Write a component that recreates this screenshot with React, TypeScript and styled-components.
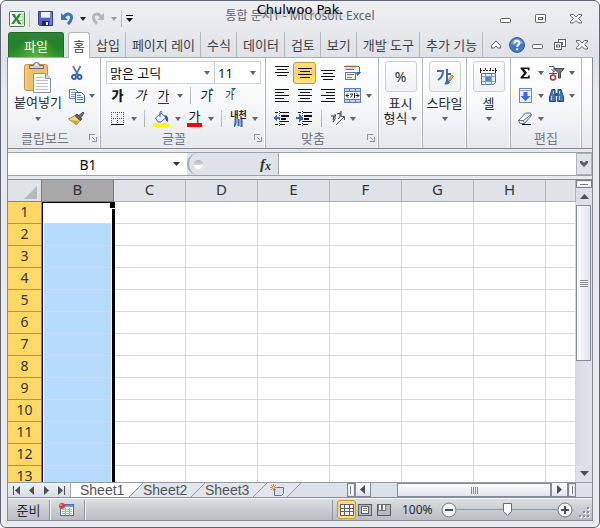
import React, { useEffect, useState } from "react";
import styled, { createGlobalStyle, css } from "styled-components";

const UI = `"Noto Sans", "Noto Sans CJK KR", sans-serif`;

const Global = createGlobalStyle`
  *, *::before, *::after { box-sizing: border-box; }
  body { margin: 0; background: #fff; font-family: ${UI}; font-size: 13px; color: #262a30; }
  button, input, select { font: inherit; color: inherit; margin: 0; padding: 0; border: 0; background: none; border-radius: 0; outline: 0; }
  svg { display: block; flex: none; }
`;

/* ---------- window ---------- */

const Frame = styled.div`
  height: 100vh;
  display: flex;
  flex-direction: column;
  padding: 0 6px 6px;
  border: 1px solid #626873;
  border-radius: 6px;
  background: linear-gradient(#eeeff2 0, #dfe2e6 56px, #e8eaed 90px, #ebecef 100%);
  overflow: hidden;
`;

const TitleBar = styled.header`
  position: relative;
  display: grid;
  grid-template-columns: 1fr auto 1fr;
  align-items: center;
  height: 31px;
  padding-top: 4px;
`;

const QuickAccess = styled.div`
  display: flex;
  align-items: center;
  padding-left: 2px;
`;

const ToolButton = styled.button<{ $w?: number; $h?: number }>`
  display: flex;
  align-items: center;
  justify-content: center;
  flex: none;
  width: ${(p) => p.$w ?? 23}px;
  height: ${(p) => p.$h ?? 23}px;
`;

const ThinRule = styled.span<{ $w?: number }>`
  flex: none;
  width: ${(p) => p.$w ?? 11}px;
  height: 17px;
  background: linear-gradient(#c5c9ce, #a9adb3) center / 1px 100% no-repeat;
`;

const Title = styled.h1`
  align-self: start;
  margin: 0;
  padding-top: 3px;
  font-size: 12px;
  font-weight: 400;
  line-height: 16px;
  color: #5b6067;
  white-space: nowrap;
`;

const UserName = styled.div`
  position: absolute;
  top: 0;
  left: 0;
  right: 0;
  text-align: center;
  font: 13px/18px "DejaVu Sans", sans-serif;
  color: #000;
  text-shadow: 3px 3px 2px #b4b6b9;
  pointer-events: none;
`;

const WindowControls = styled.div`
  display: flex;
  justify-content: flex-end;
  gap: 12px;
  padding-right: 6px;
`;

/* ---------- ribbon tabs ---------- */

const TabStrip = styled.nav`
  display: flex;
  align-items: stretch;
  height: 25px;
`;

const FileTab = styled.button`
  width: 56px;
  margin: 0 4px 0 1px;
  border: 1px solid #1d6a25;
  border-bottom: 0;
  border-radius: 3px 3px 0 0;
  background: radial-gradient(ellipse at 50% 100%, #5cb531, transparent 60%), linear-gradient(#2f8338, #24802c 50%, #2f9030);
  color: #fff;
  flex: none;
`;

const RibbonTab = styled.button<{ $active?: boolean }>`
  flex: none;
  height: 25px;
  padding: 0 5px 0 6px;
  line-height: 22px;
  color: #3d4248;
  white-space: nowrap;
  border-right: 1px solid #b4b9bf;
  ${(p) =>
    p.$active &&
    css`
      height: 26px;
      padding: 0 4px;
      border: 1px solid #b4b9bf;
      border-bottom: 0;
      border-radius: 3px 3px 0 0;
      background: #fff;
      z-index: 1;
    `}
`;

const DocControls = styled.div`
  display: flex;
  flex: 1;
  justify-content: space-between;
  align-items: center;
  padding: 0 1px;
`;

/* ---------- ribbon ---------- */

const Body = styled.main`
  flex: 1;
  min-height: 0;
  display: flex;
  flex-direction: column;
  border: 1px solid #858b94;
  border-top-color: #a9aeb5;
`;

const Ribbon = styled.section`
  display: flex;
  height: 91px;
  flex: none;
  border-bottom: 1px solid #85888e;
  background: linear-gradient(#fff, #f7f8f9 50%, #e5e8ec);
`;

const Group = styled.section<{ $w: number }>`
  display: grid;
  grid-template-rows: 69px 18px;
  flex: none;
  width: ${(p) => p.$w}px;
  padding-top: 3px;
  border-right: 1px solid #b2b6bc;
  box-shadow: inset -1px 0 #fff;
`;

const GroupLabel = styled.h2`
  position: relative;
  margin: 0;
  font-size: 13px;
  font-weight: 400;
  line-height: 16px;
  text-align: center;
  color: #6d7681;
`;

const LabelText = styled.span<{ $launch?: boolean }>`
  padding-right: ${(p) => (p.$launch ? 18 : 0)}px;
`;

const Launcher = styled.button`
  position: absolute;
  right: 3px;
  top: 4px;
`;

const Rows = styled.div<{ $pad: number }>`
  display: grid;
  grid-template-rows: repeat(3, 23px);
  padding-left: ${(p) => p.$pad}px;
`;

const Row = styled.div`
  display: flex;
  align-items: center;
`;

const Split = styled.div`
  display: grid;
  grid-template-columns: 57px 1fr;
`;

const PasteButton = styled.button`
  display: flex;
  flex-direction: column;
  align-items: center;
  height: 68px;
  padding-left: 3px;
  white-space: nowrap;
  line-height: 18px;
`;

const Combo = styled.label<{ $w: number }>`
  position: relative;
  display: flex;
  align-items: center;
  width: ${(p) => p.$w}px;
  height: 23px;
  border: 1px solid #cdd1d6;
  & + & { border-left: 0; }
  background: #fff;
  svg { position: absolute; right: 4px; pointer-events: none; }
`;

const ComboSelect = styled.select`
  width: 100%;
  height: 21px;
  padding-left: 3px;
  appearance: none;
  color: #111;
`;

const Toggle = styled(ToolButton)`
  border: 1px solid #c49a3c;
  border-radius: 3px;
  background: linear-gradient(#fbdc86, #fdd063 50%, #fee48c);
`;

const Glyph = styled.span<{ $kind?: "bold" | "italic" | "under" | "color"; $s?: number }>`
  font-size: ${(p) => p.$s ?? 13}px;
  line-height: 15px;
  color: #1b1b1b;
  font-weight: ${(p) => (p.$kind === "bold" ? 900 : 400)};
  font-style: ${(p) => (p.$kind === "italic" ? "italic" : "normal")};
  ${(p) => p.$kind === "under" && css`border-bottom: 1px solid #333;`}
  ${(p) => p.$kind === "color" && css`padding: 0 2px; border-bottom: 4px solid #f00; line-height: 13px;`}
`;

const GlyphSize = styled.span`
  display: flex;
  align-items: center;
  svg { margin: -13px 0 0 -3px; }
`;

const Phonetic = styled.span`
  display: flex;
  flex-direction: column;
  align-items: center;
  font-size: 9px;
  font-weight: 700;
  line-height: 9px;
  white-space: nowrap;
  color: #222;
`;

const BigButton = styled.button`
  display: flex;
  flex-direction: column;
  align-items: center;
  width: 100%;
  line-height: 15px;
  white-space: nowrap;
`;

const BigIcon = styled.span`
  display: flex;
  align-items: center;
  justify-content: center;
  width: 32px;
  height: 31px;
  margin-bottom: 4px;
  border: 1px solid #ccd0d6;
  border-radius: 3px;
  background: linear-gradient(#fdfdfe, #eff1f4);
  font-size: 14px;
`;

const Inline = styled.span<{ $h?: number }>`
  display: flex;
  align-items: center;
  gap: 4px;
  height: ${(p) => p.$h ?? 15}px;
`;

/* ---------- formula bar ---------- */

const FormulaBar = styled.section`
  display: flex;
  flex: none;
  height: 24px;
  margin-top: 3px;
  border: solid #9ba1a9;
  border-width: 1px 0;
  background: #dfe2e6;
`;

const NameBox = styled.label`
  position: relative;
  display: flex;
  align-items: center;
  width: 179px;
  background: #fff;
  svg { position: absolute; right: 7px; pointer-events: none; }
`;

const NameInput = styled.input`
  width: 160px;
  text-align: center;
  font-size: 14px;
  color: #111;
`;

const FxArea = styled.div`
  display: flex;
  justify-content: space-between;
  align-items: center;
  width: 92px;
  padding: 0 7px 0 5px;
  border: 1px solid #a4a9b0;
  border-width: 0 1px 0 2px;
  border-radius: 11px 0 0 11px;
`;

const Knob = styled.span`
  width: 9px;
  height: 9px;
  border-radius: 5px;
  background: linear-gradient(#aeb2b7, #d4d7da 50%, #fff 60%);
`;

const FxButton = styled.button`
  font: italic bold 15px/18px "Liberation Serif", serif;
  color: #333;
  sub { font-size: 12px; line-height: 10px; vertical-align: -1px; }
`;

const FormulaInput = styled.input`
  flex: 1;
  min-width: 0;
  padding: 0 4px;
  background: #fff;
  font-size: 14px;
`;

const Expand = styled(ToolButton)`
  border: 1px solid #b0b5bb;
`;

/* ---------- sheet ---------- */

const SheetArea = styled.section`
  display: flex;
  flex: 1;
  min-height: 0;
  margin-top: 3px;
  border-top: 1px solid #85888e;
`;

const GridViewport = styled.div`
  position: relative;
  flex: 1;
  min-width: 0;
  overflow: hidden;
  background: #fff;
`;

const Sheet = styled.table`
  width: 100%;
  table-layout: fixed;
  border-collapse: separate;
  border-spacing: 0;
  font-size: 15px;
  line-height: 19px;
  color: #32363b;
  th { font-weight: 400; vertical-align: top; }
`;

const Col = styled.col<{ $w?: number }>`
  width: ${(p) => (p.$w ? p.$w + "px" : "auto")};
`;

const ColHead = styled.th<{ $on?: boolean }>`
  height: 22px;
  padding: 0;
  border-right: 1px solid ${(p) => (p.$on ? "#75787c" : "#b2b6bb")};
  border-bottom: 1px solid ${(p) => (p.$on ? "#75787c" : "#a9adb2")};
  background: ${(p) => (p.$on ? "#a8a8a8" : "#dfe2e6")};
`;

const Corner = styled.td`
  padding: 0;
  border-right: 1px solid #75787c;
  border-bottom: 1px solid #b78434;
  background: #dfe2e6;
  svg { margin: 4px 4px 0 auto; }
`;

const RowHead = styled.th`
  height: 22px;
  padding: 0;
  border-right: 1px solid #b78434;
  border-bottom: 1px solid #c68f36;
  background: #fed965;
  font-size: 14px;
`;

const Cell = styled.td<{ $sel?: boolean }>`
  height: 22px;
  padding: 0;
  border-right: 1px solid #d8d9da;
  border-bottom: 1px solid ${(p) => (p.$sel ? "#c9def6" : "#d8d9da")};
  background: ${(p) => (p.$sel ? "#b7daff" : "#fff")};
`;

const Selection = styled.div`
  position: absolute;
  left: 34px;
  top: 22px;
  bottom: -4px;
  width: 73px;
  border: 1px solid #000;
  border-right-width: 3px;
  box-shadow: inset 1px 0 #fff, inset -1px 0 #fff;
  pointer-events: none;
  &::after {
    content: "";
    position: absolute;
    right: -4px;
    top: 0;
    width: 7px;
    height: 6px;
    border: solid #fff;
    border-width: 0 1px 1px;
    background: #000;
  }
`;

const VScroll = styled.div`
  display: flex;
  flex-direction: column;
  width: 16px;
  background: #dce0e6;
`;

const SplitBox = styled.span<{ $v?: boolean }>`
  flex: none;
  width: ${(p) => (p.$v ? 8 : 16)}px;
  height: ${(p) => (p.$v ? 14 : 8)}px;
  border: 1px solid #7f848c;
  background: #fff;
  box-shadow: inset 0 0 0 1px #e4e7ef;
  display: flex;
  align-items: center;
  justify-content: center;
  &::before {
    content: "";
    width: ${(p) => (p.$v ? 1 : 8)}px;
    height: ${(p) => (p.$v ? 8 : 1)}px;
    background: #70757c;
  }
`;

const Track = styled.div<{ $h?: boolean }>`
  flex: 1;
  display: flex;
  flex-direction: ${(p) => (p.$h ? "row" : "column")};
  background: ${(p) => (p.$h ? "#dce0e8" : "linear-gradient(90deg, #d5dae3, #e0e4ea)")};
`;

const Thumb = styled.div<{ $h?: boolean }>`
  display: flex;
  align-items: center;
  justify-content: center;
  border: 1px solid #858c97;
  background: linear-gradient(${(p) => (p.$h ? "180deg" : "90deg")}, #fbfcfd, #e1e5eb);
  ${(p) => (p.$h ? css`width: 154px; margin-left: auto;` : css`height: 156px; width: 15px;`)}
`;

/* ---------- sheet tabs ---------- */

const SheetBar = styled.section`
  display: flex;
  flex: none;
  height: 16px;
  border-top: 1px solid #959ca6;
  border-bottom: 1px solid #8b9199;
  background: #dce0e8;
`;

const SheetNav = styled.div`
  display: flex;
  align-items: center;
  justify-content: space-around;
  width: 63px;
  padding: 0 2px;
  border-right: 1px solid #a4a9b0;
  background: linear-gradient(#eef0f4, #d9dde4);
`;

const SheetTab = styled.button<{ $active?: boolean }>`
  flex: none;
  width: ${(p) => (p.$active ? 58 : 48)}px;
  height: 14px;
  padding-left: ${(p) => (p.$active ? 9 : 0)}px;
  font: 14px/14px "Liberation Sans", sans-serif;
  color: #50555b;
  background: ${(p) => (p.$active ? "#fff" : "#e2e5ea")};
  text-align: left;
`;

const NewSheet = styled(ToolButton)`
  background: #e2e5ea;
`;

const HScroll = styled.div`
  display: flex;
  flex: none;
  width: 42%;
  margin-left: auto;
`;

const ScrollArrow = styled(ToolButton)<{ $flat?: boolean }>`
  ${(p) => !p.$flat && css`
    border: 1px solid #858c97;
    border-top: 0;
    background: linear-gradient(#fff, #dfe3e8);
  `}
`;

const Gap = styled.span`
  width: 16px;
`;

/* ---------- status bar ---------- */

const StatusBar = styled.footer`
  display: flex;
  align-items: center;
  flex: none;
  height: 22px;
  border-top: 1px solid #f4f5f6;
  background: linear-gradient(#dcdfe2, #c9ccd0 50%, #b9bdc2);
`;

const StatusItem = styled.div<{ $w: number }>`
  display: flex;
  align-items: center;
  justify-content: center;
  flex: none;
  width: ${(p) => p.$w}px;
  height: 20px;
  border-right: 1px solid #92969c;
  box-shadow: 1px 0 #eceef0;
  line-height: 18px;
`;

const Views = styled.div`
  display: flex;
  align-items: center;
  margin-left: auto;
  padding-left: 4px;
  height: 20px;
  border-left: 1px solid #92969c;
`;

const ZoomText = styled.button`
  width: 39px;
  margin-left: 8px;
  font-size: 12px;
  line-height: 18px;
  text-align: left;
`;

const ZoomRange = styled.input`
  width: 100px;
  height: 17px;
  appearance: none;
  background: linear-gradient(#8f95a2, #8f95a2) center / 100% 1px no-repeat;
  &::-webkit-slider-thumb {
    appearance: none;
    width: 9px;
    height: 13px;
    background: url("data:image/svg+xml,%3Csvg xmlns='http://www.w3.org/2000/svg' width='9' height='13'%3E%3Cpath d='M.5.5h8v8l-4 4-4-4z' fill='%23f7f8f9' stroke='%23666c76'/%3E%3C/svg%3E");
  }
`;

const Grip = styled.span`
  display: flex;
  align-self: flex-end;
  margin-left: 6px;
  padding: 0 1px 1px 0;
`;

/* ---------- drawings ---------- */

const Down = ({ c = "#5f656e" }: { c?: string }) => (
  <svg width="6" height="4"><path d="M0 0h6L3 4z" fill={c} /></svg>
);

const Drop = ({ w = 10, c, label }: { w?: number; c?: string; label: string }) => (
  <ToolButton $w={w} aria-label={label}><Down c={c} /></ToolButton>
);

const Arrow = ({ dir, bar, c = "#4b5057" }: { dir: "l" | "r" | "u" | "d"; bar?: boolean; c?: string }) => {
  const d = { l: "M7 0v9L2 4.5z", r: "M2 0v9l5-4.5z", u: "M0 7h9L4.500 2z", d: "M0 2h9L4.500 7z" }[dir];
  return (
    <svg width="9" height="9">
      <path d={d} fill={c} />
      {bar && <rect x={dir === "l" ? 0 : 8} width="1" height="9" fill={c} />}
    </svg>
  );
};

const ExcelIcon = () => (
  <svg width="16" height="16" viewBox="0 0 16 16">
    <rect x=".5" y=".5" width="15" height="15" rx="1" fill="#f4faf2" stroke="#3a8245" />
    <path d="M10 3h4v10h-4M10 6h4M10 9.500h4" fill="none" stroke="#9cc99b" />
    <path d="M2.500 3h3.200l1.800 3 2-3h2.700L9 8l3.500 5H9.300L7.300 9.800 5 13H2l3.800-5.200z" fill="#328c35" />
  </svg>
);

const SaveIcon = () => (
  <svg width="15" height="15" viewBox="0 0 15 15">
    <path d="M.5.5h14v14h-13l-1-1z" fill="#5560c8" stroke="#343f97" />
    <rect x="3" y="1" width="9" height="6" fill="#eef2fb" />
    <rect x="3" y="6" width="9" height="1" fill="#b7c3ea" />
    <rect x="4" y="10" width="7" height="5" fill="#1f2760" />
    <rect x="8" y="11" width="2" height="3" fill="#f3f5fc" />
    <path d="M13 1v13" stroke="#8c9be4" />
  </svg>
);

const UndoIcon = ({ c, flip }: { c: string; flip?: boolean }) => (
  <svg width="14" height="13" viewBox="0 0 14 13">
    <g transform={flip ? "matrix(-1 0 0 1 14 0)" : undefined}>
      <path d="M4 5C6 1 12 1 11.500 6c-.3 2.500-2 4.500-3.500 6" fill="none" stroke={c} strokeWidth="3" />
      <path d="M1 1v7h7z" fill={c} />
    </g>
  </svg>
);

const WinMin = () => (
  <svg width="12" height="10"><rect x=".5" y="4.500" width="10" height="4" rx="1" fill="#fff" stroke="#5f6470" /></svg>
);
const WinMax = () => (
  <svg width="12" height="10">
    <rect x=".5" y=".5" width="10" height="8" rx="1" fill="#fff" stroke="#5f6470" />
    <rect x="3.500" y="3.500" width="4" height="2" fill="#fff" stroke="#5f6470" />
  </svg>
);
const WinClose = () => (
  <svg width="12" height="10">
    <path d="M.5.5h3L6 3 8.500.5h3v1.500L8.500 4.500l3 3v1.500h-3L6 6.500 3.500 9h-3V7.500l3-3-3-2.500z" fill="#fff" stroke="#5f6470" />
  </svg>
);
const WinRestore = () => (
  <svg width="12" height="12">
    <rect x="4.500" y=".5" width="7" height="7" fill="#fff" stroke="#5f6470" />
    <rect x="6.500" y="3.500" width="2" height="2" fill="#fff" stroke="#5f6470" />
    <rect x=".5" y="3.500" width="7" height="7" fill="#fff" stroke="#5f6470" />
    <rect x="2.500" y="6" width="3" height="2" fill="#fff" stroke="#5f6470" />
  </svg>
);
const Collapse = () => (
  <svg width="10" height="9">
    <path d="M.5 5.500 5 1l4.500 4.500V8H7L5 6 3 8H.5z" fill="#fff" stroke="#5f6470" />
  </svg>
);
const Help = () => (
  <svg width="16" height="16">
    <circle cx="8" cy="8" r="7.500" fill="#4278c8" stroke="#2f62ae" />
    <path d="M2 7a6 5 0 0 1 12 0c-4-1-8 2-12 0z" fill="#75a2df" />
    <path d="M5.500 6.200C5.500 3 10.800 3 10.500 6.200 10.300 7.800 8.200 8 8.200 10M8.200 11.300v2" fill="none" stroke="#fff" strokeWidth="2" />
  </svg>
);

const PasteIcon = () => (
  <svg width="28" height="32" viewBox="0 0 28 32">
    <rect x=".5" y="3.500" width="23" height="26" rx="2" fill="#f1c068" stroke="#c9913e" />
    <path d="M2 5v23" stroke="#f9dc9c" />
    <path d="M5.500 7.500v-3h4a3 3 0 0 1 6 0h4v3z" fill="#cdd2d9" stroke="#666d77" />
    <circle cx="12.500" cy="3.500" r="1" fill="#fff" />
    <path d="M9.500 12.500h12l5 5v14h-17z" fill="#fbfcfe" stroke="#8194b5" />
    <path d="M21.500 12.500v5h5" fill="#d4def0" stroke="#8194b5" />
    <path d="M12 16.500h8M12 19.500h12M12 22.500h12M12 25.500h12M12 28.500h12" stroke="#b3c0da" />
  </svg>
);

const CutIcon = () => (
  <svg width="12" height="16" viewBox="0 0 12 16">
    <path d="M2 1l5 9M9.500 1 5 10" stroke="#65798f" strokeWidth="1.800" />
    <circle cx="3" cy="12" r="2" fill="none" stroke="#2b5fc0" strokeWidth="1.800" />
    <circle cx="8.500" cy="12" r="2" fill="none" stroke="#2b5fc0" strokeWidth="1.800" />
    <path d="M4 10l2-2 2 2" stroke="#2b5fc0" fill="none" />
  </svg>
);

const CopyIcon = () => (
  <svg width="16" height="15" viewBox="0 0 16 15">
    <path d="M.5 1.500h6l3 3v6h-9z" fill="#eef4fd" stroke="#5d82b8" />
    <path d="M2 4.500h4M2 6.500h5M2 8.500h5" stroke="#7fa3d5" />
    <path d="M6.500 4.500h6l3 3v7h-9z" fill="#f4f8fe" stroke="#3a63a5" />
    <path d="M8 7.500h4M8 9.500h6M8 11.500h6" stroke="#5583c6" />
  </svg>
);

const BrushIcon = () => (
  <svg width="17" height="15" viewBox="0 0 17 15">
    <path d="M.5 8 7 4.500l5 5L8.500 14z" fill="#f2d678" stroke="#b38e34" />
    <path d="M3 9l5 5 3-4z" fill="#c9a548" />
    <path d="M7 4.500 9 3l5 5-2 1.500z" fill="#5b6577" stroke="#404859" />
    <path d="M11 4.500 15 1l1 1-3 4.500z" fill="#6f7890" stroke="#464c63" />
  </svg>
);

const BordersIcon = () => (
  <svg width="14" height="14" shapeRendering="crispEdges">
    <path d="M.5 0v12M6.500 0v12M12.500 0v12M0 .5h13M0 6.500h13" stroke="#555" strokeDasharray="1 1" />
    <path d="M0 12.500h13" stroke="#111" />
  </svg>
);

const FillIcon = () => (
  <svg width="17" height="16" viewBox="0 0 17 16">
    <path d="M2.500 7 8 2l5 4.500-5 4.500H5z" fill="#e6eefa" stroke="#4b6da8" />
    <path d="M7 6V1.500c0-1.500 2-1.500 2 0" fill="none" stroke="#4d5a70" />
    <path d="M11 4c4 0 4.500 3 4 7-2-1-3-3-3-5z" fill="#2c5da8" />
    <rect y="12" width="16" height="4" fill="#ff0" />
  </svg>
);

const RiverIcon = () => (
  <svg width="9" height="8"><path d="M1.500 0v4L0 8M4.500 0v7M7.500 0v8" stroke="#2f5fc4" strokeWidth="2" fill="none" /></svg>
);

const TriUp = () => <svg width="5" height="3"><path d="M0 3h5L2.500 0z" fill="#2f5aa8" /></svg>;
const TriDown = () => <svg width="5" height="3"><path d="M0 0h5L2.500 3z" fill="#2f5aa8" /></svg>;

/* each entry is [indent, width] of one text line */
const Lines = ({ rows, top = 0, gap = 3 }: { rows: [number, number][]; top?: number; gap?: number }) => (
  <svg width="14" height="14" shapeRendering="crispEdges">
    {rows.map(([x, w], i) => <rect key={i} x={x} y={top + i * gap} width={w} height="1" fill="#111" />)}
  </svg>
);

const vRows: [number, number][] = [[0, 14], [2, 10], [0, 14], [2, 10]];

const Indent = ({ out }: { out?: boolean }) => (
  <svg width="17" height="15" shapeRendering="crispEdges">
    <path d="M2 1.500h3M7 1.500h9M7 10.500h9M2 13.500h3M7 13.500h5" stroke="#111" />
    <path d="M8 5h8M8 8h5" stroke="#111" strokeWidth="2" />
    <path d="M6.500 0v15" stroke="#444" strokeDasharray="1 1" />
    <path d={out ? "M0 7 4 3v3h3v2H4v3z" : "M7 7 3 3v3H0v2h3v3z"} fill="#3667c4" />
  </svg>
);

const WrapIcon = () => (
  <svg width="18" height="17" viewBox="0 0 18 17">
    <rect x="1" y="1" width="11" height="5" fill="#cfe0f4" />
    <path d="M0 2.500h15M2 5.500h8" stroke="#a0622e" />
    <rect x="1.500" y="8.500" width="10" height="7" fill="#e7effa" stroke="#5378aa" />
    <path d="M3 10.500h7M3 13.500h5" stroke="#b56d2d" />
    <path d="M15.500 3v6M12.500 8.500h4l-3 3z" stroke="#3e6cb2" fill="#3e6cb2" />
  </svg>
);

const MergeIcon = () => (
  <svg width="17" height="15" viewBox="0 0 17 15">
    <rect x=".5" y=".5" width="16" height="14" fill="#bcd2ee" stroke="#5b7fae" />
    <path d="M5.500 0v4M11.500 0v4M5.500 11v4M11.500 11v4" stroke="#5b7fae" />
    <rect x=".5" y="3.500" width="16" height="8" fill="#fff" stroke="#5b7fae" />
    <path d="M2 7.500h3M15 7.500h-3M4 5.500l-2 2 2 2M13 5.500l2 2-2 2M6 6h3L6.500 9.500M10.500 5v5M10.500 7.500h1" stroke="#222" fill="none" />
  </svg>
);

const OrientIcon = () => (
  <svg width="17" height="15" viewBox="0 0 17 15">
    <path d="M1 5l3 0-1 4M5 3v5M5 5l1-1M7 3l3-1v4M11 0v5M8 8l2-2M3 11l2-3" stroke="#333" fill="none" />
    <path d="M6 14 14 6M11 5.500h3.500V9" stroke="#555" fill="none" />
  </svg>
);

const StyleIcon = () => (
  <svg width="18" height="18" viewBox="0 0 18 18">
    <path d="M1 3h6c0 4-2 7-5 9M11 1v12M11 6h4" stroke="#3f6cb8" strokeWidth="2" fill="none" />
    <path d="M8 16c2-1 1-4 4-4l2 2c0 2-3 3-6 2z" fill="#3869bc" />
    <path d="M12.500 11.500 16 7l1.500 1.500-3.500 4.500z" fill="#f2c14c" stroke="#a87b2b" />
  </svg>
);

const CellIcon = () => (
  <svg width="17" height="18" viewBox="0 0 17 18">
    <path d="M.5 0v5M5.500 0v3M10.500 0v3M15.500 0v5M0 2.500h17" stroke="#222" strokeDasharray="2 1" />
    <path d="M1.500 5.500h14v9l-2 2h-12z" fill="#e8f0fb" stroke="#53719c" />
    <path d="M2 8.500h13M2 13.500h13M5.500 6v11M11.500 6v11" stroke="#7b9cc7" />
    <rect x="6" y="9" width="5" height="4" fill="#4e87dc" />
  </svg>
);

const SumIcon = () => (
  <svg width="11" height="12" viewBox="0 0 11 12">
    <path d="M.5.5h9v3h-1L7.500 2H4l3 3.800L3.500 10h4.200l1-1.700h1v3.200H.5v-1L4 6 .5 1.500z" fill="#111" />
  </svg>
);

const SortIcon = () => (
  <svg width="17" height="16" viewBox="0 0 17 16">
    <path d="M1 1.500h5v4M3.500 4l2.500 3 2.500-3" fill="none" stroke="#2f5fb5" />
    <path d="M1 8.500h8M5 7v3" stroke="#b3323a" fill="none" />
    <circle cx="5" cy="12.500" r="2.500" fill="none" stroke="#b3323a" strokeWidth="1.500" />
    <path d="M6 3.500h10L12.500 8v5h-2V8z" fill="#777c84" stroke="#44484e" />
  </svg>
);

const FillDown = () => (
  <svg width="13" height="15" viewBox="0 0 13 15">
    <rect x=".5" y=".5" width="12" height="14" fill="#eaf1fb" stroke="#6a8bbb" />
    <path d="M1 2.500h11" stroke="#8ba8d0" />
    <path d="M4.500 4h4v4h3l-5 5-5-5h3z" fill="#2f6fd4" />
  </svg>
);

const FindIcon = () => (
  <svg width="15" height="13" viewBox="0 0 15 13">
    <path d="M3 .5h3V5l.5 7.500h-6V8zM12 .5H9V5l-.5 7.500h6V8z" fill="#4874b8" stroke="#234680" />
    <path d="M2.500 7v4M10.500 7v4M4.500 2v3M10.500 2v3" stroke="#bdd1ef" />
    <path d="M6 4h3v3H6z" fill="#31588f" />
  </svg>
);

const EraserIcon = () => (
  <svg width="15" height="13" viewBox="0 0 15 13">
    <path d="M.5 8.500 7.500 1h5l1 2.500-7 8H2z" fill="#f3f6fb" stroke="#5f6f8a" />
    <path d="M.5 8.500h5l8-6M5.500 8.500l1 3" fill="none" stroke="#5f6f8a" />
    <path d="M4 12.500h9" stroke="#111" />
  </svg>
);

const LauncherIcon = () => (
  <svg width="8" height="8" shapeRendering="crispEdges">
    <path d="M0 .5h6M.5 0v6" stroke="#8d949d" />
    <path d="M3 3l3 3M7.500 3v5M3 7.500h5" stroke="#8d949d" />
  </svg>
);

const MacroIcon = () => (
  <svg width="16" height="14" viewBox="0 0 16 14">
    <rect x="1.500" y="1.500" width="13" height="11" fill="#f6f9fd" stroke="#4a6ea8" />
    <rect x="2" y="2" width="12" height="2" fill="#6c93d3" />
    <path d="M3 6.500h10M3 8.500h10M3 10.500h10M6.500 5v7M10.500 5v7" stroke="#98b3dc" />
    <circle cx="3" cy="3" r="3" fill="#d4472f" />
    <circle cx="2" cy="2" r="1" fill="#f6a08d" />
  </svg>
);

const NewSheetIcon = () => (
  <svg width="15" height="13" viewBox="0 0 15 13">
    <path d="M4.500 3.500h9v6l-2 2h-7z" fill="#d5e2f6" stroke="#5a74a5" />
    <path d="M3.500 0v7M0 3.500h7M1 1l5 5M6 1 1 6" stroke="#dd8b20" />
    <circle cx="3.500" cy="3.500" r="1" fill="#fff3b8" />
  </svg>
);

const Slash = ({ left, right }: { left: string; right: string }) => (
  <svg width="14" height="14">
    <rect width="14" height="14" fill={right} />
    <path d="M0 0h14L0 14z" fill={left} />
    <path d="M14 0 0 14" stroke="#9298a1" />
  </svg>
);

const ViewIcon = ({ kind }: { kind: "grid" | "page" | "break" }) => (
  <svg width="14" height="12" shapeRendering="crispEdges">
    <rect x=".5" y=".5" width="13" height="11" fill={kind === "grid" ? "#fff" : "#b5b8bc"} stroke="#5c6066" />
    {kind === "grid" && <path d="M0 4.500h14M0 7.500h14M4.500 0v12M9.500 0v12" stroke="#5c6066" />}
    {kind === "page" && <><rect x="3.500" y="2.500" width="7" height="7" fill="#fff" stroke="#5c6066" /><path d="M5 4.500h4M5 6.500h4" stroke="#777" /></>}
    {kind === "break" && <path d="M1.500.5h3v6h-3zM5.500.5h3v6h-3z" fill="#fff" stroke="#6f7379" />}
  </svg>
);

const ZoomKnob = ({ plus }: { plus?: boolean }) => (
  <svg width="16" height="16">
    <circle cx="8" cy="8" r="7" fill="#f3f4f5" stroke="#71767e" />
    <path d={plus ? "M4 8h8M8 4v8" : "M4 8h8"} stroke="#4b4f55" strokeWidth="2" />
  </svg>
);

const GripDots = () => (
  <svg width="12" height="12" shapeRendering="crispEdges">
    {[[8, 0], [4, 4], [8, 4], [0, 8], [4, 8], [8, 8]].map(([x, y]) => (
      <g key={`${x}-${y}`}><rect x={x + 1} y={y + 1} width="2" height="2" fill="#fff" /><rect x={x} y={y} width="2" height="2" fill="#8d929c" /></g>
    ))}
  </svg>
);

/* ---------- page ---------- */

const TABS = ["삽입", "페이지 레이", "수식", "데이터", "검토", "보기", "개발 도구", "추가 기능"];
const COLS = ["B", "C", "D", "E", "F", "G", "H"];

/* height of everything around the rows, and of one row */
const CHROME = 248;
const ROW = 22;
const countRows = () => Math.max(1, Math.ceil((window.innerHeight - CHROME) / ROW));

const useRowCount = () => {
  const [count, setCount] = useState(countRows);
  useEffect(() => {
    const update = () => setCount(countRows());
    window.addEventListener("resize", update);
    return () => window.removeEventListener("resize", update);
  }, []);
  return count;
};

const Label = ({ text, launch }: { text: string; launch?: boolean }) => (
  <GroupLabel>
    <LabelText $launch={launch}>{text}</LabelText>
    {launch && <Launcher aria-label={`${text} 옵션`}><LauncherIcon /></Launcher>}
  </GroupLabel>
);

export default function App() {
  const [zoom, setZoom] = useState(100);
  const rows = Array.from({ length: useRowCount() }, (_, i) => i + 1);
  return (
    <>
      <Global />
      <Frame>
        <TitleBar>
          <QuickAccess>
            <ExcelIcon />
            <ThinRule $w={9} />
            <ToolButton $w={22} aria-label="저장"><SaveIcon /></ToolButton>
            <ToolButton $w={22} aria-label="실행 취소"><UndoIcon c="#3e72c4" /></ToolButton>
            <Drop w={9} c="#222" label="실행 취소 목록" />
            <ToolButton $w={22} aria-label="다시 실행"><UndoIcon c="#b3b6ba" flip /></ToolButton>
            <Drop w={9} c="#9a9da2" label="다시 실행 목록" />
            <ThinRule $w={7} />
            <ToolButton $w={9} aria-label="사용자 지정">
              <svg width="7" height="7"><path d="M0 .5h7" stroke="#111" /><path d="M0 3h7L3.500 7z" fill="#111" /></svg>
            </ToolButton>
          </QuickAccess>
          <Title>통합 문서1 - Microsoft Excel</Title>
          <WindowControls>
            <ToolButton aria-label="최소화"><WinMin /></ToolButton>
            <ToolButton aria-label="최대화"><WinMax /></ToolButton>
            <ToolButton aria-label="닫기"><WinClose /></ToolButton>
          </WindowControls>
          <UserName>Chulwoo Pak.</UserName>
        </TitleBar>

        <TabStrip>
          <FileTab>파일</FileTab>
          <RibbonTab $active>홈</RibbonTab>
          {TABS.map((t) => <RibbonTab key={t}>{t}</RibbonTab>)}
          <DocControls>
            <ToolButton aria-label="리본 최소화"><Collapse /></ToolButton>
            <ToolButton $w={16} aria-label="도움말"><Help /></ToolButton>
            <ToolButton $w={20} aria-label="통합 문서 최소화"><WinMin /></ToolButton>
            <ToolButton $w={20} aria-label="통합 문서 복원"><WinRestore /></ToolButton>
            <ToolButton $w={20} aria-label="통합 문서 닫기"><WinClose /></ToolButton>
          </DocControls>
        </TabStrip>

        <Body>
          <Ribbon>
            <Group $w={93}>
              <Split>
                <PasteButton>
                  <PasteIcon />
                  붙여넣기
                  <Inline><Down /></Inline>
                </PasteButton>
                <Rows $pad={0}>
                  <Row><ToolButton aria-label="잘라내기"><CutIcon /></ToolButton></Row>
                  <Row><ToolButton aria-label="복사"><CopyIcon /></ToolButton><Drop w={8} label="복사 옵션" /></Row>
                  <Row><ToolButton aria-label="서식 복사"><BrushIcon /></ToolButton></Row>
                </Rows>
              </Split>
              <Label text="클립보드" launch />
            </Group>

            <Group $w={165}>
              <Rows $pad={5}>
                <Row>
                  <Combo $w={109}>
                    <ComboSelect aria-label="글꼴"><option>맑은 고딕</option></ComboSelect><Down />
                  </Combo>
                  <Combo $w={46}>
                    <ComboSelect aria-label="글꼴 크기"><option>11</option></ComboSelect><Down />
                  </Combo>
                </Row>
                <Row>
                  <ToolButton aria-label="굵게"><Glyph $kind="bold">가</Glyph></ToolButton>
                  <ToolButton aria-label="기울임꼴"><Glyph $kind="italic">가</Glyph></ToolButton>
                  <ToolButton aria-label="밑줄"><Glyph $kind="under">가</Glyph></ToolButton>
                  <Drop label="밑줄 종류" />
                  <ThinRule />
                  <ToolButton aria-label="글꼴 크게"><GlyphSize><Glyph>가</Glyph><TriUp /></GlyphSize></ToolButton>
                  <ToolButton aria-label="글꼴 작게"><GlyphSize><Glyph $s={10}>가</Glyph><TriDown /></GlyphSize></ToolButton>
                </Row>
                <Row>
                  <ToolButton aria-label="테두리"><BordersIcon /></ToolButton>
                  <Drop label="테두리 종류" />
                  <ThinRule />
                  <ToolButton aria-label="채우기 색"><FillIcon /></ToolButton>
                  <Drop label="채우기 색 목록" />
                  <ToolButton aria-label="글꼴 색"><Glyph $kind="color">가</Glyph></ToolButton>
                  <Drop label="글꼴 색 목록" />
                  <ThinRule />
                  <ToolButton aria-label="윗주"><Phonetic>내천<RiverIcon /></Phonetic></ToolButton>
                  <Drop label="윗주 옵션" />
                </Row>
              </Rows>
              <Label text="글꼴" launch />
            </Group>

            <Group $w={113}>
              <Rows $pad={4}>
                <Row>
                  <ToolButton aria-label="위쪽 맞춤"><Lines rows={vRows} top={0} /></ToolButton>
                  <Toggle $h={22} aria-label="가운데 세로 맞춤"><Lines rows={vRows} top={2} /></Toggle>
                  <ToolButton aria-label="아래쪽 맞춤"><Lines rows={vRows} top={4} /></ToolButton>
                  <ToolButton $w={27} aria-label="텍스트 줄 바꿈"><WrapIcon /></ToolButton>
                </Row>
                <Row>
                  <ToolButton aria-label="왼쪽 맞춤"><Lines rows={[[0, 14], [0, 9], [0, 14], [0, 9], [0, 14]]} /></ToolButton>
                  <ToolButton aria-label="가운데 맞춤"><Lines rows={[[0, 14], [2, 10], [0, 14], [2, 10], [0, 14]]} /></ToolButton>
                  <ToolButton aria-label="오른쪽 맞춤"><Lines rows={[[0, 14], [5, 9], [0, 14], [5, 9], [0, 14]]} /></ToolButton>
                  <ToolButton $w={27} aria-label="병합하고 가운데 맞춤"><MergeIcon /></ToolButton>
                  <Drop w={6} label="병합 옵션" />
                </Row>
                <Row>
                  <ToolButton aria-label="내어쓰기"><Indent out /></ToolButton>
                  <ToolButton aria-label="들여쓰기"><Indent /></ToolButton>
                  <ThinRule />
                  <ToolButton aria-label="방향"><OrientIcon /></ToolButton>
                  <Drop w={6} label="방향 옵션" />
                </Row>
              </Rows>
              <Label text="맞춤" launch />
            </Group>

            <Group $w={44}>
              <BigButton>
                <BigIcon>%</BigIcon>
                표시
                <Inline>형식 <Down /></Inline>
              </BigButton>
            </Group>
            <Group $w={44}>
              <BigButton>
                <BigIcon><StyleIcon /></BigIcon>
                스타일
                <Inline><Down /></Inline>
              </BigButton>
            </Group>
            <Group $w={44}>
              <BigButton>
                <BigIcon><CellIcon /></BigIcon>
                셀
                <Inline><Down /></Inline>
              </BigButton>
            </Group>

            <Group $w={71}>
              <Rows $pad={3}>
                <Row>
                  <ToolButton aria-label="자동 합계"><SumIcon /></ToolButton>
                  <Drop w={8} label="합계 옵션" />
                  <ToolButton aria-label="정렬 및 필터"><SortIcon /></ToolButton>
                  <Drop w={8} label="정렬 옵션" />
                </Row>
                <Row>
                  <ToolButton aria-label="채우기"><FillDown /></ToolButton>
                  <Drop w={8} label="채우기 옵션" />
                  <ToolButton aria-label="찾기 및 선택"><FindIcon /></ToolButton>
                  <Drop w={8} label="찾기 옵션" />
                </Row>
                <Row>
                  <ToolButton aria-label="지우기"><EraserIcon /></ToolButton>
                  <Drop w={8} label="지우기 옵션" />
                </Row>
              </Rows>
              <Label text="편집" />
            </Group>
          </Ribbon>

          <FormulaBar>
            <NameBox>
              <NameInput aria-label="이름 상자" defaultValue="B1" />
              <svg width="7" height="4"><path d="M0 0h7L3.500 4z" fill="#333" /></svg>
            </NameBox>
            <FxArea>
              <Knob />
              <FxButton aria-label="함수 삽입">f<sub>x</sub></FxButton>
            </FxArea>
            <FormulaInput aria-label="수식 입력줄" />
            <Expand $w={16} $h={22} aria-label="수식 입력줄 확장">
              <svg width="8" height="6"><path d="M0 0h2l2 2 2-2h2v2L4 6 0 2z" fill="#565b62" /></svg>
            </Expand>
          </FormulaBar>

          <SheetArea>
            <GridViewport>
              <Sheet>
                <colgroup>
                  <Col $w={34} />
                  {COLS.map((c) => <Col key={c} $w={72} />)}
                  <Col />
                </colgroup>
                <thead>
                  <tr>
                    <Corner><svg width="13" height="13"><path d="M13 0v13H0z" fill="#b6babf" /></svg></Corner>
                    {COLS.map((c) => <ColHead key={c} scope="col" $on={c === "B"}>{c}</ColHead>)}
                    <ColHead />
                  </tr>
                </thead>
                <tbody>
                  {rows.map((r) => (
                    <tr key={r}>
                      <RowHead scope="row">{r}</RowHead>
                      {COLS.map((c) => <Cell key={c} $sel={c === "B" && r > 1} />)}
                      <Cell />
                    </tr>
                  ))}
                </tbody>
              </Sheet>
              <Selection />
            </GridViewport>
            <VScroll>
              <SplitBox />
              <ScrollArrow $flat $w={16} $h={17} aria-label="위로"><Arrow dir="u" /></ScrollArrow>
              <Track>
                <Thumb>
                  <svg width="8" height="7" shapeRendering="crispEdges"><path d="M0 .5h8M0 2.500h8M0 4.500h8M0 6.500h8" stroke="#858b94" /></svg>
                </Thumb>
              </Track>
              <ScrollArrow $flat $w={16} $h={17} aria-label="아래로"><Arrow dir="d" /></ScrollArrow>
            </VScroll>
          </SheetArea>

          <SheetBar>
            <SheetNav>
              <ToolButton $w={12} $h={14} aria-label="첫 시트"><Arrow dir="l" bar /></ToolButton>
              <ToolButton $w={12} $h={14} aria-label="이전 시트"><Arrow dir="l" /></ToolButton>
              <ToolButton $w={12} $h={14} aria-label="다음 시트"><Arrow dir="r" /></ToolButton>
              <ToolButton $w={12} $h={14} aria-label="마지막 시트"><Arrow dir="r" bar /></ToolButton>
            </SheetNav>
            <SheetTab $active>Sheet1</SheetTab>
            <Slash left="#fff" right="#e2e5ea" />
            <SheetTab>Sheet2</SheetTab>
            <Slash left="#e2e5ea" right="#e2e5ea" />
            <SheetTab>Sheet3</SheetTab>
            <Slash left="#e2e5ea" right="#e2e5ea" />
            <NewSheet $w={20} $h={14} aria-label="워크시트 삽입"><NewSheetIcon /></NewSheet>
            <Slash left="#e2e5ea" right="#dce0e8" />
            <HScroll>
              <SplitBox $v />
              <ScrollArrow $w={16} $h={14} aria-label="왼쪽으로"><Arrow dir="l" /></ScrollArrow>
              <Track $h>
                <Thumb $h>
                  <svg width="7" height="7" shapeRendering="crispEdges"><path d="M.5 0v7M2.500 0v7M4.500 0v7M6.500 0v7" stroke="#858b94" /></svg>
                </Thumb>
              </Track>
              <ScrollArrow $w={17} $h={14} aria-label="오른쪽으로"><Arrow dir="r" /></ScrollArrow>
              <SplitBox $v />
              <Gap />
            </HScroll>
          </SheetBar>

          <StatusBar>
            <StatusItem $w={42}>준비</StatusItem>
            <StatusItem $w={35}><MacroIcon /></StatusItem>
            <Views>
              <Toggle $w={19} $h={19} aria-label="기본"><ViewIcon kind="grid" /></Toggle>
              <ToolButton $w={18} $h={19} aria-label="페이지 레이아웃"><ViewIcon kind="page" /></ToolButton>
              <ToolButton $w={20} $h={19} aria-label="페이지 나누기 미리 보기"><ViewIcon kind="break" /></ToolButton>
            </Views>
            <ZoomText>{zoom}%</ZoomText>
            <ToolButton $w={16} $h={17} aria-label="축소" onClick={() => setZoom(Math.max(10, zoom - 10))}><ZoomKnob /></ToolButton>
            <ZoomRange type="range" min={10} max={190} value={zoom} aria-label="확대/축소" onChange={(e) => setZoom(Number(e.target.value))} />
            <ToolButton $w={16} $h={17} aria-label="확대" onClick={() => setZoom(Math.min(190, zoom + 10))}><ZoomKnob plus /></ToolButton>
            <Grip><GripDots /></Grip>
          </StatusBar>
        </Body>
      </Frame>
    </>
  );
}
